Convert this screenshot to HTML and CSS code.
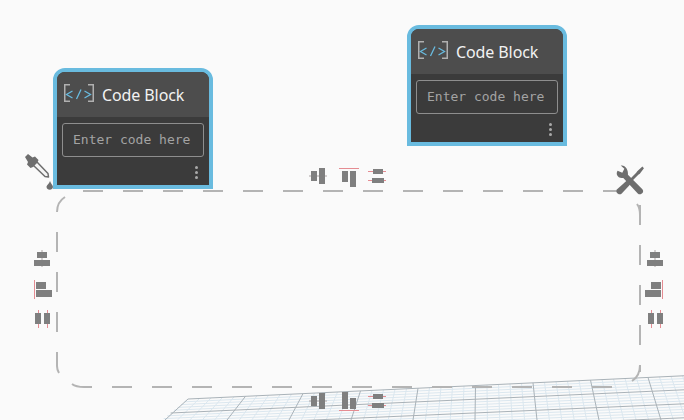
FILE: index.html
```html
<!DOCTYPE html>
<html lang="en">
<head>
    <meta charset="UTF-8">
    <title>Code Block group</title>
    <link rel="stylesheet" href="styles.css">
</head>
<body>
<div class="canvas">
    <svg class="backdrop" width="684" height="420" viewBox="0 0 684 420">
        <!-- floor grid -->
        <g id="floor"></g>

        <!-- group outline -->
        <g class="outline">
            <path d="M83 191H617" />
            <path d="M112 387H612" />
            <path d="M57 232V352" />
            <path d="M640 205V372" />
            <path class="corner" d="M65 197Q57 202 57 212" />
            <path class="corner" d="M637 204Q640 208 640 215" />
            <path class="corner" d="M640 365Q640 376 632 381" />
            <path class="corner" d="M57 352V366Q57 370 59 373" />
            <path class="corner" d="M72 384Q76 387 84 387H92" />
        </g>

        <!-- align icons, top -->
        <g class="align">
            <use href="#alignMiddle" x="309" y="168" />
            <use href="#alignTop" x="339" y="168" />
            <use href="#alignStack" x="368" y="168" />
        </g>
        <!-- align icons, left -->
        <g class="align">
            <use href="#alignCenter" x="33" y="250" />
            <use href="#alignLeft" x="34" y="280" />
            <use href="#alignPair" x="34" y="310" />
        </g>
        <!-- align icons, right -->
        <g class="align">
            <use href="#alignCenter" x="646" y="250" />
            <use href="#alignRight" x="644" y="280" />
            <use href="#alignPair" x="647" y="310" />
        </g>
        <!-- align icons, bottom -->
        <g class="align">
            <use href="#alignMiddle" x="309" y="393" />
            <use href="#alignBottom" x="339" y="392" />
            <use href="#alignStack" x="368" y="393" />
        </g>

        <defs>
            <g id="alignMiddle">
                <path class="guide" d="M0 8H18" />
                <rect x="2" y="3" width="6" height="10" />
                <rect x="10" y="0" width="6" height="16" />
            </g>
            <g id="alignTop">
                <path class="mark" d="M0 .5H20" />
                <rect x="3" y="3" width="6" height="11" />
                <rect x="11" y="3" width="6" height="16" />
            </g>
            <g id="alignBottom">
                <path class="mark" d="M0 18.500H20" />
                <rect x="3" y="0" width="6" height="17" />
                <rect x="11" y="6" width="6" height="11" />
            </g>
            <g id="alignStack">
                <path class="mark" d="M0 3.500H18M0 12.500H18" />
                <rect x="5" y="1" width="10" height="5" />
                <rect x="4" y="10" width="12" height="5" />
            </g>
            <g id="alignCenter">
                <path class="guide" d="M9 0V17" />
                <rect x="4" y="2" width="10" height="6" />
                <rect x="1" y="10" width="16" height="6" />
            </g>
            <g id="alignLeft">
                <path class="mark" d="M.5 0V19" />
                <rect x="2" y="2" width="10" height="7" />
                <rect x="2" y="10" width="16" height="7" />
            </g>
            <g id="alignRight">
                <path class="mark" d="M18.500 0V19" />
                <rect x="7" y="2" width="10" height="7" />
                <rect x="1" y="10" width="16" height="7" />
            </g>
            <g id="alignPair">
                <path class="mark" d="M4.500 0V18M13.500 0V18" />
                <rect x="1" y="3" width="6" height="11" />
                <rect x="10" y="3" width="6" height="11" />
            </g>
        </defs>
    </svg>

    <svg class="tool dropper" width="32" height="38" viewBox="0 0 32 38">
        <path class="glass" d="M14 9 L25 20.500 L25.500 24 L22 23.500 L10.500 12.500" />
        <path class="solid" d="M2 4 L5 1 L9.500 4.500 L12 3.500 L15.500 7 L14.500 9.500 L10 14 L7.500 15 L4 11.500 L5 9 Z" />
        <path class="solid" d="M27 28 C28 31 30 32 30 34 A3.300 3.300 0 0 1 23.500 34 C23.500 32 26 31 27 28 Z" />
    </svg>

    <svg class="tool wrench" width="33" height="33" viewBox="0 0 32 32">
        <path class="solid" d="M7.500 1.500 L11 4.500 L9 8.500 L4.500 6.500 C2.500 9 4 13.500 8.500 13.500 L10 13.500 L24 28.500 C26.500 31 31 27.500 28.500 24.500 L14.500 10.500 C15 5 11.500 0.500 7.500 1.500 Z" />
        <path class="solid" d="M28.500 2.500 L30 4 L26 9.500 L24.500 10.500 L19 16 L17 14 L22.500 8.500 L23.500 7 Z" />
        <path class="solid" d="M14 15.500 L17.500 19 L8.500 28.500 C6 31 1.500 27.500 4 24.500 Z" />
    </svg>

    <div class="node node-a">
        <div class="node-head">
            <svg class="code-icon" width="30" height="18" viewBox="0 0 30 18">
                <path class="bracket" d="M6 .75H.75V17.250H6M24 .75H29.250V17.250H24" />
                <path class="code" d="M8.500 7L2.500 10.500L8.500 14M12.500 15L17 5.500M20.500 7L26.500 10.500L20.500 14" />
            </svg>
            <span class="node-title">Code Block</span>
        </div>
        <div class="node-body">
            <div class="code-input">Enter code here</div>
            <div class="node-more"><i></i><i></i><i></i></div>
        </div>
    </div>

    <div class="node node-b">
        <div class="node-head">
            <svg class="code-icon" width="30" height="18" viewBox="0 0 30 18">
                <path class="bracket" d="M6 .75H.75V17.250H6M24 .75H29.250V17.250H24" />
                <path class="code" d="M8.500 7L2.500 10.500L8.500 14M12.500 15L17 5.500M20.500 7L26.500 10.500L20.500 14" />
            </svg>
            <span class="node-title">Code Block</span>
        </div>
        <div class="node-body">
            <div class="code-input">Enter code here</div>
            <div class="node-more"><i></i><i></i><i></i></div>
        </div>
    </div>
</div>
<script src="floor.js"></script>
</body>
</html>
```

FILE: styles.css
```css
html, body { margin: 0; padding: 0; }
body { background: #fafafa; font-family: "Noto Sans", "Open Sans", sans-serif; overflow: hidden; }
.canvas { position: relative; width: 684px; height: 420px; overflow: hidden; }
.backdrop { position: absolute; left: 0; top: 0; }

.outline path { fill: none; stroke: #b4b4b4; stroke-width: 2; stroke-dasharray: 20 20; }
.outline path.corner { stroke-dasharray: none; }

.align { fill: #7f7f7f; }
.guide { stroke: #aaa2a2; stroke-width: 1; fill: none; }
.mark { stroke: #e58c92; stroke-width: 1; fill: none; }

.floor-minor { stroke: #dbe7ef; stroke-width: 1; }
.floor-major { stroke: #a9b2b8; stroke-width: 1; }

.tool { position: absolute; }
.tool .solid { fill: #6e6e6e; }
.tool .glass { fill: #f4f4f4; stroke: #6e6e6e; stroke-width: 1.5; stroke-linejoin: round; }
.dropper { left: 23px; top: 153px; }
.wrench { left: 613px; top: 164px; }

.node { position: absolute; box-sizing: border-box; width: 160px; height: 121px; display: flex; flex-direction: column; border: 4px solid #69bbdf; border-radius: 12px 12px 0 0; background: #3b3b3b; }
.node-a { left: 53px; top: 68px; }
.node-b { left: 407px; top: 25px; }
.node-head { height: 45px; display: flex; align-items: center; gap: 8px; padding-left: 7px; background: #4d4d4d; border-radius: 8px 8px 0 0; }
.node-title { color: #f2f2f2; font-size: 16px; letter-spacing: -0.1px; }
.code-icon { fill: none; margin-top: -3px; }
.code-icon .bracket { stroke: #b0b0b0; stroke-width: 1.5; }
.code-icon .code { stroke: #69bbdf; stroke-width: 1.3; }

.node-body { flex: 1; padding: 6px 5px 0; }
.code-input { box-sizing: border-box; height: 34px; line-height: 32px; padding-left: 10px; border: 1px solid #8e8e8e; border-radius: 3px; color: #a3a3a3; font-family: "DejaVu Sans Mono", monospace; font-size: 13px; }
.node-more { display: flex; flex-direction: column; align-items: flex-end; gap: 2px; margin-top: 9px; padding-right: 6px; }
.node-more i { display: block; width: 3px; height: 3px; border-radius: 50%; background: #a9a9a9; }
```

FILE: floor.js
```js
// floor grid, one major cell is five minor cells
var floor = document.getElementById("floor");
var NS = "http://www.w3.org/2000/svg";

function addLine(x1, y1, x2, y2, cls) {
    var line = document.createElementNS(NS, "line");
    line.setAttribute("x1", x1);
    line.setAttribute("y1", y1);
    line.setAttribute("x2", x2);
    line.setAttribute("y2", y2);
    line.setAttribute("class", cls);
    floor.appendChild(line);
}

function backY(x) { return 399 - (x - 188) * 24 / 512; }

function drawLines(isMajor) {
    // lines running away from the viewer
    for (var i = 0; i <= 50; i++) {
        if ((i % 5 == 0) != isMajor) continue;
        var k = i / 5;
        var x = 188 + 57.5 * k;
        addLine(x, backY(x), 165 + 62 * k, 420, isMajor ? "floor-major" : "floor-minor");
    }
    // lines running across
    for (var j = 0; j <= 20; j++) {
        if ((j % 5 == 0) != isMajor) continue;
        var d = j * 2.8;
        addLine(188 - 1.24 * d, 399 + d, 700 + 1.24 * d, 375 + d * 0.95, isMajor ? "floor-major" : "floor-minor");
    }
}

drawLines(false);
drawLines(true);
```
